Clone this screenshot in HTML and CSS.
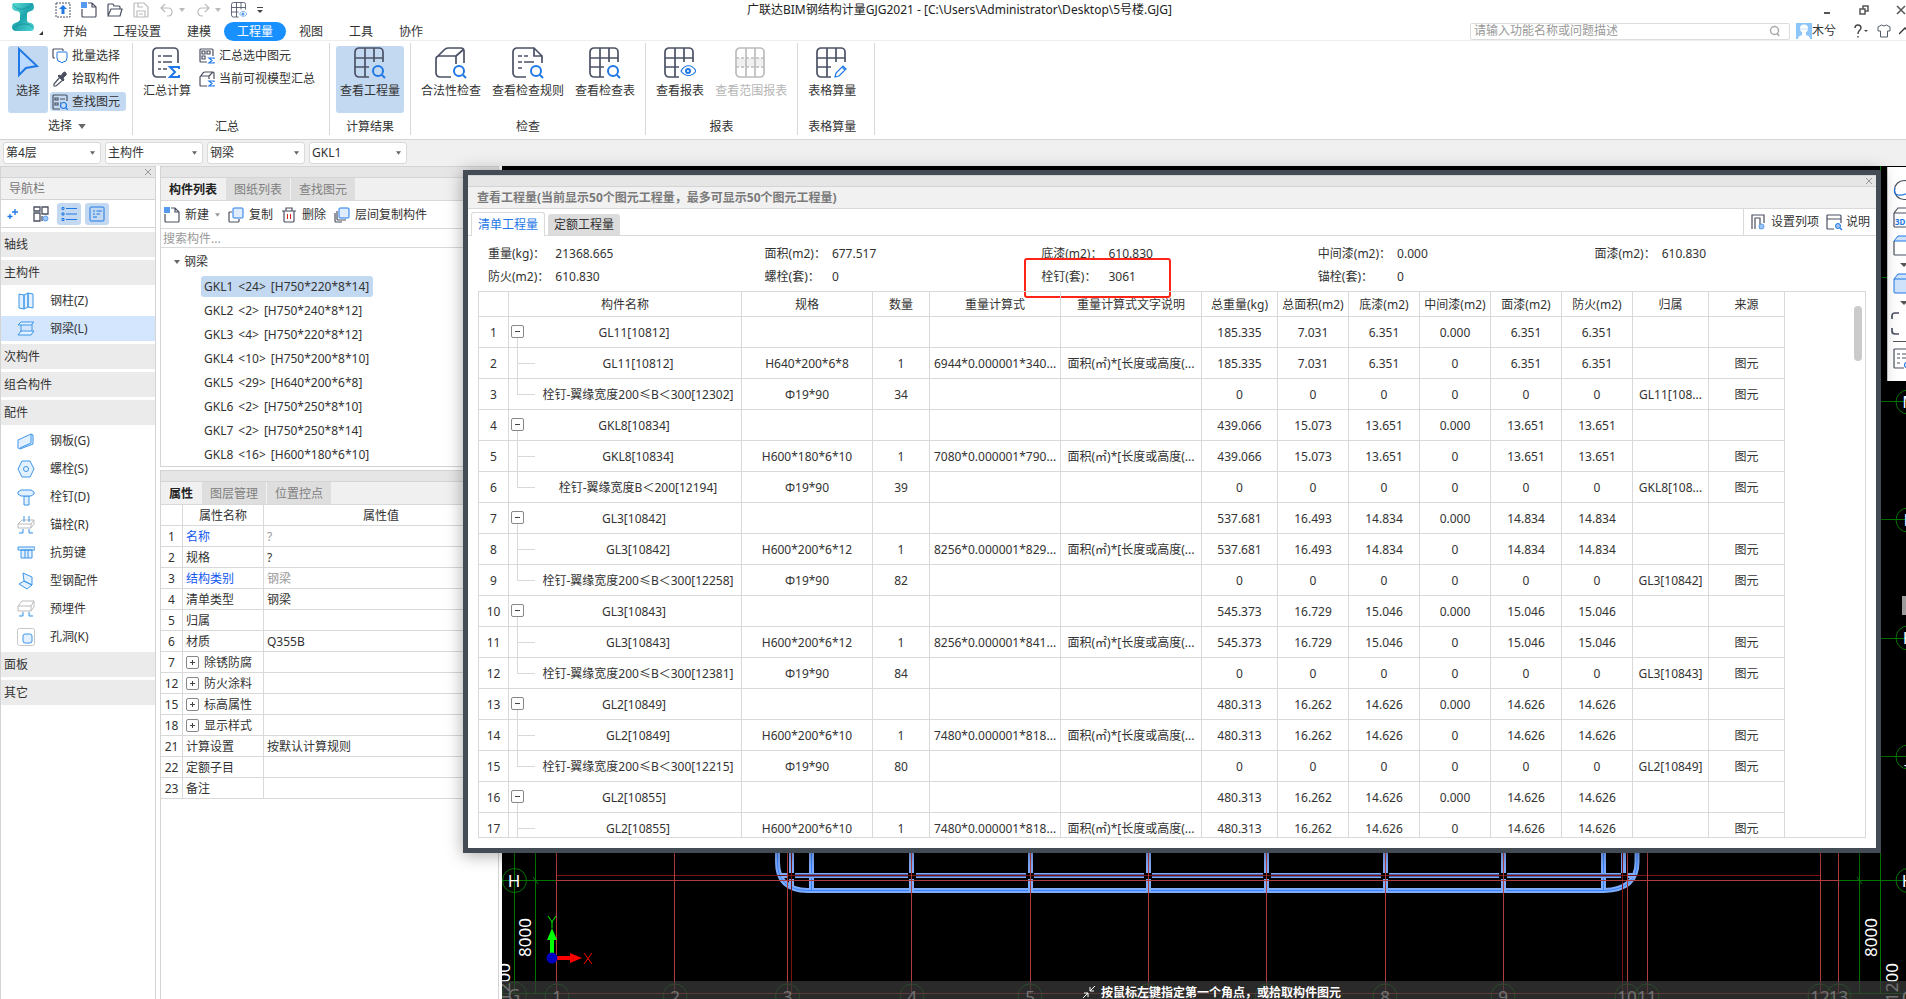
FILE: index.html
```html
<!DOCTYPE html>
<html lang="zh-CN">
<head>
<meta charset="utf-8">
<title>广联达BIM钢结构计量GJG2021</title>
<link rel="stylesheet" href="styles.css">
</head>
<body>
<svg class="sprite" aria-hidden="true">
  <defs>
    <linearGradient id="teal" x1="0" y1="0" x2="1" y2="1"><stop offset="0" stop-color="#5fe0d8"/><stop offset=".5" stop-color="#1fa5ad"/><stop offset="1" stop-color="#4fd6d6"/></linearGradient>
  </defs>
  <symbol id="i-grid" viewBox="0 0 32 32"><path d="M15 30H5a4 4 0 0 1-4-4V5a4 4 0 0 1 4-4h20a4 4 0 0 1 4 4v10M1 11h28M1 20h14M11 1v29M20 1v14" class="d2"/></symbol>
  <symbol id="i-lens" viewBox="0 0 32 32"><circle cx="24" cy="24" r="5" class="b2"/><path d="M28 28l3 3" class="b2"/></symbol>
  <symbol id="i-gridlens" viewBox="0 0 32 32"><use href="#i-grid"/><use href="#i-lens"/></symbol>
  <symbol id="i-grideye" viewBox="0 0 32 32"><use href="#i-grid"/><path d="M17 24c4-7 11-7 15 0c-4 6-11 6-15 0z" class="b1"/><circle cx="24" cy="24" r="2" class="b2"/></symbol>
  <symbol id="i-gridpen" viewBox="0 0 32 32"><use href="#i-grid"/><path d="M19 30l1-4 7-7 3 3-7 7zM26 20l3 3" class="b1"/></symbol>
  <symbol id="i-gridoff" viewBox="0 0 32 32"><path d="M2 11h27v9H2z" fill="#f0f0f0"/><path d="M5 1h20a4 4 0 0 1 4 4v21a4 4 0 0 1-4 4H5a4 4 0 0 1-4-4V5a4 4 0 0 1 4-4zM11 1v29M20 1v29" class="g2"/><path d="M1 11h28M1 20h28" class="g2" stroke-dasharray="3 2"/></symbol>
  <symbol id="i-sum" viewBox="0 0 32 32"><path d="M15 30H6a4 4 0 0 1-4-4V5a4 4 0 0 1 4-4h17a4 4 0 0 1 4 4v11M7 9h3M12 9h9M7 15h3M12 15h9M7 22h3M12 22h4" class="d2"/><path d="M28 22v-2H19l5 5-5 5h9v-2" class="b2"/></symbol>
  <symbol id="i-boxlens" viewBox="0 0 32 32"><path d="M16 30H5a4 4 0 0 1-4-4V12a3 3 0 0 1 3-3h17v8M2 10l7-7q2-2 4-2h13a3 3 0 0 1 3 3v12M21 9l8-7" class="d2"/><use href="#i-lens"/></symbol>
  <symbol id="i-doclens" viewBox="0 0 32 32"><path d="M14 30H5a4 4 0 0 1-4-4V5a4 4 0 0 1 4-4h17l8 8v7M22 1v8h8M6 9h4M12 9h4M6 15h4M12 15h10M6 21h4" class="d2"/><use href="#i-lens"/></symbol>
  <symbol id="i-cursor" viewBox="0 0 32 32"><path d="M7 2v26l7-7 11-2z" fill="#bcd9ff" stroke="#1f78e6" stroke-width="2"/></symbol>
  <symbol id="i-batch" viewBox="0 0 16 16"><path d="M11 3V2q0-1-1-1H2Q1 1 1 2v7q0 1 1 1h1" class="d1"/><path d="M6 4h8q1 0 1 1v5q0 4-4 4l-1 1-1-1q-4 0-4-4V5q0-1 1-1z" fill="#fff" stroke="#1f78e6"/></symbol>
  <symbol id="i-drop" viewBox="0 0 16 16"><path d="M8 6l3 3-7 6H2v-2z" class="d1"/><path d="M7 4l2 1 2-3q2-2 3 0t-1 3l-2 2 1 2-1 1-5-5z" fill="#4b5060" stroke="#4b5060"/></symbol>
  <symbol id="i-find" viewBox="0 0 16 16"><path d="M8 15H2Q1 15 1 14V2q0-1 1-1h12q1 0 1 1v5M3 4h3v2H3zM8 5h5M3 9h3v2H3zM8 9h1" class="d1"/><circle cx="11.500" cy="11.500" r="3" class="b1"/><path d="M14 14l2 2" class="b1"/></symbol>
  <symbol id="i-sumsel" viewBox="0 0 16 16"><path d="M8 14H2Q1 14 1 13V2q0-1 1-1h11q1 0 1 1v6M3 3h3v3H3zM8 3h3v3H8zM3 8h3v3H3z" class="d1"/><path d="M15 11v-1h-5l3 2.500L10 15h5v-1" class="b1"/></symbol>
  <symbol id="i-sumbox" viewBox="0 0 16 16"><path d="M8 15H2Q1 15 1 14V6q0-1 1-1h8v3M1 6l3-4q1-1 2-1h8q1 0 1 1v6M10 5l4-4" class="d1"/><path d="M15 11v-1h-5l3 2.500L10 15h5v-1" class="b1"/></symbol>
  <symbol id="i-up" viewBox="0 0 16 16"><path d="M1 1h14v14H1z" fill="none" stroke="#4b5060" stroke-dasharray="2 1"/><path d="M8 3l4 4H9.500v5h-3V7H4z" fill="#1f78e6"/></symbol>
  <symbol id="i-new" viewBox="0 0 16 16"><path d="M7 1h4l4 4v9q0 1-1 1H2q-1 0-1-1V7M11 1v4h4" class="d1"/><path d="M0 1h6M0 3h6M0 5h6M1 0v6M3 0v6M5 0v6" stroke="#1f78e6" fill="none"/></symbol>
  <symbol id="i-open" viewBox="0 0 16 16"><path d="M1 13V3q0-1 1-1h4l1 2h5q1 0 1 1v2M1 14l3-7h11l-2 7z" class="d1"/></symbol>
  <symbol id="i-save" viewBox="0 0 16 16"><path d="M2 1h9l4 4v9q0 1-1 1H2q-1 0-1-1V2q0-1 1-1zM4 15V9h8v6M5 1v4h5M6 12h4" class="g1"/></symbol>
  <symbol id="i-undo" viewBox="0 0 16 16"><path d="M6 2L2 6l4 4M2 6h7q4 0 4 4t-4 4H8" class="g1"/></symbol>
  <symbol id="i-redo" viewBox="0 0 16 16"><path d="M10 2l4 4-4 4M14 6H7q-4 0-4 4t4 4h1" class="g1"/></symbol>
  <symbol id="i-tri" viewBox="0 0 6 4"><path d="M0 0h6L3 4z" fill="currentColor"/></symbol>
  <symbol id="i-copy" viewBox="0 0 16 16"><path d="M4 5H2Q1 5 1 6v8q0 1 1 1h8q1 0 1-1v-2" class="d1"/><rect x="5" y="1" width="10" height="10" rx="1" fill="#e0edff" stroke="#1f78e6"/></symbol>
  <symbol id="i-lcopy" viewBox="0 0 16 16"><path d="M3 4v8q0 1 1 1h8M1 6v8q0 1 1 1h6" class="d1"/><rect x="5" y="1" width="10" height="10" rx="1" fill="#e0edff" stroke="#1f78e6"/></symbol>
  <symbol id="i-trash" viewBox="0 0 16 16"><path d="M1 4h14M5 4V1h6v3M3 4v10q0 1 1 1h8q1 0 1-1V4" class="d1"/><path d="M6.500 7v5M9.500 7v5" stroke="#e0261c"/></symbol>
  <symbol id="i-x" viewBox="0 0 8 8"><path d="M1 1l6 6M7 1l-6 6" stroke="currentColor" fill="none"/></symbol>
  <symbol id="n-col" viewBox="0 0 18 18"><path d="M2 2l5 1v14l-5-1zM7 3l4-2v14l-4 2zM11 1l5 1v14l-5-1z" class="n"/></symbol>
  <symbol id="n-beam" viewBox="0 0 18 18"><path d="M4 2h13l-3 3H1zM4 5v7M15 4v7M4 11h13l-3 4H1z" class="n"/></symbol>
  <symbol id="n-plate" viewBox="0 0 18 18"><path d="M1 8l13-6 2 1v9l-13 5-2-1zM14 2v9L3 16" class="n"/></symbol>
  <symbol id="n-bolt" viewBox="0 0 18 18"><path d="M5 1h8l4 8-4 8H5L1 9z" class="n"/><circle cx="9" cy="9" r="2.500" class="n"/></symbol>
  <symbol id="n-stud" viewBox="0 0 18 18"><path d="M7 8h5v9H7z" class="n"/><path d="M4 2h10l3 2v2l-3 2H4L1 6V4z" class="n"/></symbol>
  <symbol id="n-anchor" viewBox="0 0 18 18"><path d="M1 8l4-4h12l-3 4zM1 8v4h13V8M14 12l3-4V4" fill="none" stroke="#bbb"/><path d="M7 0v6M12 0v6M6 13v4H2M12 13v4h4" class="n"/></symbol>
  <symbol id="n-key" viewBox="0 0 18 18"><path d="M1 3h17v3H1zM4 6h11v8H4zM8 6v8M11 6v8" class="n"/></symbol>
  <symbol id="n-fit" viewBox="0 0 18 18"><path d="M6 1l9 4v8l-8-4zM7 9L2 12l8 5 5-4z" class="n"/></symbol>
  <symbol id="n-embed" viewBox="0 0 18 18"><path d="M1 6l4-5h12l-3 5zM1 6v5h13V6M14 11l3-4V1" fill="none" stroke="#bbb"/><path d="M6 12v4H2M12 12v4h4" class="n"/></symbol>
  <symbol id="n-hole" viewBox="0 0 18 18"><rect x=".5" y=".5" width="17" height="17" rx="2" fill="#fff" stroke="#c8c8c8"/><rect x="6" y="6" width="9" height="9" rx="2" class="n"/></symbol>
</svg>

<header class="top">
  <svg class="logo" viewBox="0 0 24 30"><path d="M2 1h19q2 1 2 4t-3 4q-4 1-4 3v6q0 3 4 3 3 1 3 4t-2 4H4q-3-1-3-4t3-4q4-1 5-3v-6q0-3-4-3Q1 8 1 5t1-4z" fill="url(#teal)"/><path d="M2 2q3 6 10 5t10-6M2 27q4-5 11-5t9 4" stroke="#17868f" fill="none" opacity=".6"/></svg>
  <svg class="logo-corner" viewBox="0 0 4 4"><path d="M4 0v4H0z" fill="#333"/></svg>
  <div class="top-main">
    <div class="titlebar">
      <div class="quick">
        <button aria-label="上传"><svg class="s16"><use href="#i-up"/></svg></button>
        <button aria-label="新建"><svg class="s16"><use href="#i-new"/></svg></button>
        <button aria-label="打开"><svg class="s16"><use href="#i-open"/></svg></button>
        <button aria-label="保存"><svg class="s16"><use href="#i-save"/></svg></button>
        <button aria-label="撤销" class="off"><svg class="s16"><use href="#i-undo"/></svg><svg class="tri"><use href="#i-tri"/></svg></button>
        <button aria-label="重做" class="off"><svg class="s16"><use href="#i-redo"/></svg><svg class="tri"><use href="#i-tri"/></svg></button>
        <button aria-label="查看报表"><svg class="s16"><use href="#i-grideye"/></svg></button>
        <button aria-label="自定义"><svg class="more" viewBox="0 0 6 7"><path d="M0 .5h6" stroke="#444"/><path d="M0 3h6L3 6z" fill="#444"/></svg></button>
      </div>
      <h1>广联达BIM钢结构计量GJG2021 - [C:\Users\Administrator\Desktop\5号楼.GJG]</h1>
      <div class="winbtns">
        <button aria-label="最小化"><svg viewBox="0 0 10 10"><path d="M2 8h6" stroke="#555" stroke-width="2"/></svg></button>
        <button aria-label="还原"><svg viewBox="0 0 10 10"><path d="M1 4h5v5H1zM4 4V1h5v5H6" fill="none" stroke="#555" stroke-width="1.500"/></svg></button>
        <button aria-label="关闭"><svg viewBox="0 0 10 10"><path d="M1 1l8 8M9 1l-8 8" stroke="#555" stroke-width="1.500"/></svg></button>
      </div>
    </div>
    <div class="menubar">
      <nav class="menu"><a href="#">开始</a><a href="#">工程设置</a><a href="#">建模</a><a href="#" class="on">工程量</a><a href="#">视图</a><a href="#">工具</a><a href="#">协作</a></nav>
      <div class="account">
        <label class="help"><input type="text" aria-label="搜索功能" placeholder="请输入功能名称或问题描述"><svg viewBox="0 0 12 12"><circle cx="5.500" cy="5.500" r="4" fill="none" stroke="#aaa" stroke-width="1.500"/><path d="M8 8l2 3" stroke="#aaa" stroke-width="1.500"/></svg></label>
        <a href="#" class="user"><svg viewBox="0 0 16 16"><path d="M0 0h16v16H0z" fill="#8fc6f9"/><circle cx="8" cy="5.500" r="4" fill="#fff"/><path d="M2 16q0-4 6-4t6 4zM6 8h4v5H6z" fill="#fff"/><path d="M4 6h8" stroke="#c5e1fb"/></svg>木兮</a>
        <button class="q" aria-label="帮助"><svg viewBox="0 0 14 14"><path d="M1 4q0-3 3-3t3 3q0 1-2 3-1 1-1 3M4 12v1.500" fill="none" stroke="#444" stroke-width="1.400"/><path d="M10 6h4l-2 2z" fill="#444"/></svg></button>
        <button class="shirt" aria-label="皮肤"><svg viewBox="0 0 14 14"><path d="M4.500 1q2.500 2 5 0L13 3v4h-2.500v6h-7V7H1V3z" fill="none" stroke="#555c6b"/></svg></button>
        <button class="fold" aria-label="折叠"><svg viewBox="0 0 12 8"><path d="M0 7l6-6 6 6" fill="none" stroke="#333" stroke-width="1.400"/></svg></button>
      </div>
    </div>
  </div>
</header>

<section class="ribbon">
  <div class="group first">
    <div class="tools">
      <button class="big on"><svg class="s32"><use href="#i-cursor"/></svg>选择</button>
      <div class="smalls">
        <button><svg class="s16"><use href="#i-batch"/></svg>批量选择</button>
        <button><svg class="s16"><use href="#i-drop"/></svg>拾取构件</button>
        <button class="on"><svg class="s16"><use href="#i-find"/></svg>查找图元</button>
      </div>
    </div>
    <div class="caption">选择 <svg class="tri wide"><use href="#i-tri"/></svg></div>
  </div>
  <div class="group roomy">
    <div class="tools">
      <button class="big"><svg class="s32"><use href="#i-sum"/></svg>汇总计算</button>
      <div class="smalls">
        <button><svg class="s16"><use href="#i-sumsel"/></svg>汇总选中图元</button>
        <button><svg class="s16"><use href="#i-sumbox"/></svg>当前可视模型汇总</button>
      </div>
    </div>
    <div class="caption">汇总</div>
  </div>
  <div class="group">
    <div class="tools"><button class="big on"><svg class="s32"><use href="#i-gridlens"/></svg>查看工程量</button></div>
    <div class="caption">计算结果</div>
  </div>
  <div class="group">
    <div class="tools">
      <button class="big"><svg class="s32"><use href="#i-boxlens"/></svg>合法性检查</button>
      <button class="big"><svg class="s32"><use href="#i-doclens"/></svg>查看检查规则</button>
      <button class="big"><svg class="s32"><use href="#i-gridlens"/></svg>查看检查表</button>
    </div>
    <div class="caption">检查</div>
  </div>
  <div class="group">
    <div class="tools">
      <button class="big"><svg class="s32"><use href="#i-grideye"/></svg>查看报表</button>
      <button class="big" disabled><svg class="s32"><use href="#i-gridoff"/></svg>查看范围报表</button>
    </div>
    <div class="caption">报表</div>
  </div>
  <div class="group roomy">
    <div class="tools"><button class="big"><svg class="s32"><use href="#i-gridpen"/></svg>表格算量</button></div>
    <div class="caption">表格算量</div>
  </div>
</section>

<div class="combos">
  <label class="combo"><select aria-label="楼层"><option>第4层</option></select><svg class="tri"><use href="#i-tri"/></svg></label>
  <label class="combo"><select aria-label="构件大类"><option>主构件</option></select><svg class="tri"><use href="#i-tri"/></svg></label>
  <label class="combo"><select aria-label="构件类型"><option>钢梁</option></select><svg class="tri"><use href="#i-tri"/></svg></label>
  <label class="combo"><select aria-label="构件"><option>GKL1</option></select><svg class="tri"><use href="#i-tri"/></svg></label>
</div>

<main class="work">
  <aside class="nav">
    <div class="strip"><button class="close" aria-label="关闭导航栏"><svg><use href="#i-x"/></svg></button></div>
    <h2>导航栏</h2>
    <div class="navtools">
      <button aria-label="添加"><svg viewBox="0 0 16 16"><path d="M10 3v6M7 6h6M5 8v5M2.500 10.500h5" stroke="#1f78e6" stroke-width="1.300"/></svg></button>
      <button aria-label="设置"><svg viewBox="0 0 16 16"><path d="M1 1h6v4H1zM9 1h6v7H9zM1 7h6v8H1zM9 10v5" fill="none" stroke="#4b5060" stroke-width="1.300"/><circle cx="12.500" cy="12.500" r="2.500" fill="#9cc4f5" stroke="#5a9df0"/></svg></button>
      <button class="on" aria-label="列表"><svg viewBox="0 0 16 16"><path d="M5 2.500h11M5 8h11M5 13.500h11" stroke="#1f78e6"/><path d="M1 1.500h2v2H1zM1 7h2v2H1zM1 12.500h2v2H1z" fill="none" stroke="#1f78e6"/></svg></button>
      <button class="on" aria-label="详情"><svg viewBox="0 0 16 16"><rect x="1" y="1" width="14" height="14" rx="1" fill="none" stroke="#1f78e6"/><path d="M4 5h2M7.500 5H13M4 8h2M7.500 8H11M4 11h4" stroke="#1f78e6"/></svg></button>
    </div>
    <ul class="cats">
      <li class="cat">轴线</li>
      <li class="cat">主构件</li>
      <li><svg><use href="#n-col"/></svg>钢柱(Z)</li>
      <li class="sel"><svg><use href="#n-beam"/></svg>钢梁(L)</li>
      <li class="cat">次构件</li>
      <li class="cat">组合构件</li>
      <li class="cat">配件</li>
      <li><svg><use href="#n-plate"/></svg>钢板(G)</li>
      <li><svg><use href="#n-bolt"/></svg>螺栓(S)</li>
      <li><svg><use href="#n-stud"/></svg>栓钉(D)</li>
      <li><svg><use href="#n-anchor"/></svg>锚栓(R)</li>
      <li><svg><use href="#n-key"/></svg>抗剪键</li>
      <li><svg><use href="#n-fit"/></svg>型钢配件</li>
      <li><svg><use href="#n-embed"/></svg>预埋件</li>
      <li><svg><use href="#n-hole"/></svg>孔洞(K)</li>
      <li class="cat">面板</li>
      <li class="cat">其它</li>
    </ul>
  </aside>

  <div class="side">
    <section class="panel list">
      <div class="strip"></div>
      <div class="tabs"><button class="on">构件列表</button><button>图纸列表</button><button>查找图元</button></div>
      <div class="bar">
        <button><svg class="s16"><use href="#i-new"/></svg>新建<svg class="tri"><use href="#i-tri"/></svg></button>
        <button><svg class="s16"><use href="#i-copy"/></svg>复制</button>
        <button><svg class="s16"><use href="#i-trash"/></svg>删除</button>
        <button><svg class="s16"><use href="#i-lcopy"/></svg>层间复制构件</button>
      </div>
      <input class="search" type="text" aria-label="搜索构件" placeholder="搜索构件...">
      <ul class="tree">
        <li class="root"><svg class="tri"><use href="#i-tri"/></svg>钢梁</li>
        <li><span class="row sel"><b>GKL1</b><b>&lt;24&gt;</b><b>[H750*220*8*14]</b></span></li>
        <li><span class="row"><b>GKL2</b><b>&lt;2&gt;</b><b>[H750*240*8*12]</b></span></li>
        <li><span class="row"><b>GKL3</b><b>&lt;4&gt;</b><b>[H750*220*8*12]</b></span></li>
        <li><span class="row"><b>GKL4</b><b>&lt;10&gt;</b><b>[H750*200*8*10]</b></span></li>
        <li><span class="row"><b>GKL5</b><b>&lt;29&gt;</b><b>[H640*200*6*8]</b></span></li>
        <li><span class="row"><b>GKL6</b><b>&lt;2&gt;</b><b>[H750*250*8*10]</b></span></li>
        <li><span class="row"><b>GKL7</b><b>&lt;2&gt;</b><b>[H750*250*8*14]</b></span></li>
        <li><span class="row"><b>GKL8</b><b>&lt;16&gt;</b><b>[H600*180*6*10]</b></span></li>
      </ul>
    </section>
    <section class="panel props">
      <div class="strip"></div>
      <div class="tabs"><button class="on">属性</button><button>图层管理</button><button>位置控点</button></div>
      <table class="proptable">
        <colgroup><col class="p-no"><col class="p-name"><col></colgroup>
        <thead><tr><th></th><th>属性名称</th><th>属性值</th></tr></thead>
        <tbody>
          <tr><td>1</td><td class="link">名称</td><td class="dim">?</td></tr>
          <tr><td>2</td><td>规格</td><td>?</td></tr>
          <tr><td>3</td><td class="link">结构类别</td><td class="dim">钢梁</td></tr>
          <tr><td>4</td><td>清单类型</td><td>钢梁</td></tr>
          <tr><td>5</td><td>归属</td><td></td></tr>
          <tr><td>6</td><td>材质</td><td>Q355B</td></tr>
          <tr><td>7</td><td><button class="tog plus" aria-label="展开"></button>除锈防腐</td><td></td></tr>
          <tr><td>12</td><td><button class="tog plus" aria-label="展开"></button>防火涂料</td><td></td></tr>
          <tr><td>15</td><td><button class="tog plus" aria-label="展开"></button>标高属性</td><td></td></tr>
          <tr><td>18</td><td><button class="tog plus" aria-label="展开"></button>显示样式</td><td></td></tr>
          <tr><td>21</td><td>计算设置</td><td>按默认计算规则</td></tr>
          <tr><td>22</td><td>定额子目</td><td></td></tr>
          <tr><td>23</td><td>备注</td><td></td></tr>
        </tbody>
      </table>
    </section>
  </div>

  <section class="canvas">
    <svg class="drawing" viewBox="502 166 1404 833" preserveAspectRatio="xMinYMin slice">
      <g class="green">
        <path d="M514.500 840v154M535.500 840v154M502 880.500h55M1838 880.500h70M1859.500 840v154M1880.500 166v828M1882 277.500h8M1881 401.500h25M1881 519.500h25M1881 638.500h25M1881 756.500h25M533 877l5 7M1857 877l5 7M1838 993.500h70M502 993.500h55"/>
        <circle cx="514.500" cy="880.500" r="12"/><circle cx="1908" cy="880.500" r="12"/>
        <circle cx="1908" cy="402" r="12"/><circle cx="1908" cy="520" r="12"/><circle cx="1908" cy="638" r="12"/><circle cx="1908" cy="757" r="12"/>
        <circle cx="514.500" cy="994" r="12"/><circle cx="557" cy="996" r="12"/><circle cx="675" cy="996" r="12"/><circle cx="787.500" cy="996" r="12"/><circle cx="912" cy="996" r="12"/><circle cx="1030" cy="996" r="12"/><circle cx="1148.500" cy="996" r="12"/><circle cx="1267" cy="996" r="12"/><circle cx="1385" cy="996" r="12"/><circle cx="1503" cy="996" r="12"/><circle cx="1627" cy="996" r="12"/><circle cx="1647" cy="996" r="12"/><circle cx="1820" cy="996" r="12"/><circle cx="1838.500" cy="996" r="12"/>
      </g>
      <g class="beam">
        <path class="out" d="M777.500 840v22q0 28 30 28.500H1604q33-1 33-28.500v-22M811.500 840v50M1603.500 840v50"/>
        <path class="in" d="M777.500 840v22q0 28 30 28.500H1604q33-1 33-28.500v-22M811.500 840v50M1603.500 840v50"/>
        <path class="out" d="M791.500 840v33M911.500 840v33M1030.500 840v33M1148.500 840v33M1266.500 840v33M1385.500 840v33M1503.500 840v33M1623.500 840v33M911.500 879v12M1030.500 879v12M1148.500 879v12M1266.500 879v12M1385.500 879v12M1503.500 879v12M791.500 879v8"/>
        <path class="out" d="M781 875.500h6M795 875.500h113M916 875.500h110M1034 875.500h110M1152 875.500h111M1271 875.500h110M1389 875.500h110M1507 875.500h114M1627 875.500h8"/>
        <path class="core" d="M795 875.500h113M916 875.500h110M1034 875.500h110M1152 875.500h111M1271 875.500h110M1389 875.500h110M1507 875.500h114"/>
      </g>
      <path class="red dark" d="M557 875.500h1263M791.500 840v154M1622.500 840v154"/>
      <path class="red" d="M557 880.500h1281M557 993.500h1281M556.500 840v154M674.500 840v154M787.500 840v154M911.500 840v154M1030.500 840v154M1148.500 840v154M1266.500 840v154M1385.500 840v154M1503.500 840v154M1627.500 840v154M1647.500 840v154M1820.500 840v154M1838.500 840v154"/>
      <g class="labels">
        <text x="514" y="887">H</text><text x="1908" y="887">H</text><text x="1910" y="408">M</text><text x="1908" y="526">L</text><text x="1908" y="644">K</text><text x="1908" y="763">J</text>
        <text x="514" y="1001">G</text><text x="557" y="1003">1</text><text x="675" y="1003">2</text><text x="787.500" y="1003">3</text><text x="912" y="1003">4</text><text x="1030" y="1003">5</text><text x="1148.500" y="1003">6</text><text x="1267" y="1003">7</text><text x="1385" y="1003">8</text><text x="1503" y="1003">9</text><text x="1627" y="1003">10</text><text x="1647" y="1003">11</text><text x="1820" y="1003">12</text><text x="1838.500" y="1003">13</text><text x="1908" y="1003">G</text>
        <text transform="translate(531 957) rotate(-90)">8000</text><text transform="translate(1877 957) rotate(-90)">8000</text>
        <text transform="translate(510 1002) rotate(-90)">1200</text><text transform="translate(1898 1002) rotate(-90)">1200</text>
      </g>
      <path d="M1902 596h4v19h-4z" fill="#9b9b9b"/>
      <path d="M550 958V940h-3l5-12 5 12h-3v18z" fill="#0f0"/><path d="M552 956h18v-3l12 5-12 5v-3h-18z" fill="#f00"/><circle cx="552" cy="958" r="5.500" fill="#0000c0"/>
      <path d="M548 916l4 6 4-6M552 922v6" stroke="#0f0" fill="none"/><path d="M584 953l8 11M592 953l-8 11" stroke="#f00" fill="none"/>
    </svg>
    <div class="prompt"><svg viewBox="0 0 14 14"><path d="M13 1L8 6V2M8 6h4M1 13l5-5v4M6 8H2" stroke="#fff" fill="none"/></svg>按鼠标左键指定第一个角点，或拾取构件图元</div>
    <div class="dock">
      <svg viewBox="0 0 24 22"><circle cx="11" cy="11" r="9.500" class="d1"/><path d="M2 9q-2 6 3 7 8 1 17-7" class="b1"/></svg>
      <svg viewBox="0 0 24 22"><path d="M1 6l4-5h19M1 6v13q0 1 1 1h22M1 6h23" class="d1"/><text x="2" y="18" class="three">3D</text></svg>
      <svg viewBox="0 0 24 22"><path d="M1 6l4-5h19v5z" fill="#cfe2fb" stroke="#1f78e6"/><path d="M1 6v13q0 1 1 1h22" class="d1"/></svg>
      <svg class="arr" viewBox="0 0 24 4"><path d="M7 0h8l-4 4z" fill="#555"/></svg>
      <svg viewBox="0 0 24 22"><path d="M5 1h19v19H2q-1 0-1-1V6z" fill="#cfe2fb"/><path d="M24 1H5L1 6v13q0 1 1 1h22M1 6h23" fill="none" stroke="#1f78e6"/></svg>
      <svg class="arr" viewBox="0 0 24 4"><path d="M7 0h8l-4 4z" fill="#555"/></svg>
      <svg class="br" viewBox="2 0 24 24"><path d="M8 2H4Q1 2 1 5v3M1 17v3q0 3 3 3h4" class="d2"/></svg>
      <hr>
      <svg viewBox="0 0 24 22"><path d="M24 1H2Q1 1 1 2v17q0 1 1 1h9M4 6h3M9 6h9M4 10h3M9 10h9M4 15h3" class="d1"/><circle cx="14" cy="17" r="2.500" class="b1"/></svg>
    </div>
  </section>
</main>

<section class="dialog" role="dialog" aria-label="查看工程量">
  <div class="strip"><button class="close" aria-label="关闭"><svg><use href="#i-x"/></svg></button></div>
  <h2>查看工程量(当前显示50个图元工程量，最多可显示50个图元工程量)</h2>
  <div class="dtabs">
    <button class="on">清单工程量</button><button>定额工程量</button>
    <div class="dactions">
      <button><svg class="s16" viewBox="0 0 16 16"><path d="M1 15V1h12v8M4 15V4h5v11" class="d1"/><circle cx="10.500" cy="12.500" r="2.500" fill="#9cc4f5" stroke="#5a9df0"/></svg>设置列项</button>
      <button><svg class="s16" viewBox="0 0 16 16"><path d="M8 15H2Q1 15 1 14V2q0-1 1-1h12q1 0 1 1v7M1 5h14" class="d1"/><circle cx="12" cy="12" r="2.500" fill="#9cc4f5" stroke="#1f78e6"/><path d="M14 14l2 2" class="b1"/></svg>说明</button>
    </div>
  </div>
  <div class="stats">
    <dl><dt>重量(kg)：</dt><dd>21368.665</dd><dt>防火(m2)：</dt><dd>610.830</dd></dl>
    <dl><dt>面积(m2)：</dt><dd>677.517</dd><dt>螺栓(套)：</dt><dd>0</dd></dl>
    <dl><dt>底漆(m2)：</dt><dd>610.830</dd><dt>栓钉(套)：</dt><dd>3061</dd></dl>
    <dl><dt>中间漆(m2)：</dt><dd>0.000</dd><dt>锚栓(套)：</dt><dd>0</dd></dl>
    <dl><dt>面漆(m2)：</dt><dd>610.830</dd></dl>
  </div>
  <div class="mark"></div>
  <div class="gridwrap">
    <table class="qty">
      <colgroup><col class="c30"><col class="c233"><col class="c131"><col class="c57"><col class="c131"><col class="c141"><col class="c76"><col class="c71"><col class="c71"><col class="c71"><col class="c71"><col class="c71"><col class="c76"><col class="c76"></colgroup>
      <thead><tr><th><th>构件名称<th>规格<th>数量<th>重量计算式<th>重量计算式文字说明<th>总重量(kg)<th>总面积(m2)<th>底漆(m2)<th>中间漆(m2)<th>面漆(m2)<th>防火(m2)<th>归属<th>来源</tr></thead>
      <tbody>
        <tr class="par"><td>1<td><button class="tog" aria-label="折叠"></button>GL11[10812]<td><td><td><td><td>185.335<td>7.031<td>6.351<td>0.000<td>6.351<td>6.351<td><td></tr>
        <tr class="mid"><td>2<td>GL11[10812]<td>H640*200*6*8<td>1<td>6944*0.000001*340...<td>面积(㎡)*[长度或高度(...<td>185.335<td>7.031<td>6.351<td>0<td>6.351<td>6.351<td><td>图元</tr>
        <tr class="end"><td>3<td>栓钉-翼缘宽度200≤B＜300[12302]<td>Φ19*90<td>34<td><td><td>0<td>0<td>0<td>0<td>0<td>0<td>GL11[108...<td>图元</tr>
        <tr class="par"><td>4<td><button class="tog" aria-label="折叠"></button>GKL8[10834]<td><td><td><td><td>439.066<td>15.073<td>13.651<td>0.000<td>13.651<td>13.651<td><td></tr>
        <tr class="mid"><td>5<td>GKL8[10834]<td>H600*180*6*10<td>1<td>7080*0.000001*790...<td>面积(㎡)*[长度或高度(...<td>439.066<td>15.073<td>13.651<td>0<td>13.651<td>13.651<td><td>图元</tr>
        <tr class="end"><td>6<td>栓钉-翼缘宽度B＜200[12194]<td>Φ19*90<td>39<td><td><td>0<td>0<td>0<td>0<td>0<td>0<td>GKL8[108...<td>图元</tr>
        <tr class="par"><td>7<td><button class="tog" aria-label="折叠"></button>GL3[10842]<td><td><td><td><td>537.681<td>16.493<td>14.834<td>0.000<td>14.834<td>14.834<td><td></tr>
        <tr class="mid"><td>8<td>GL3[10842]<td>H600*200*6*12<td>1<td>8256*0.000001*829...<td>面积(㎡)*[长度或高度(...<td>537.681<td>16.493<td>14.834<td>0<td>14.834<td>14.834<td><td>图元</tr>
        <tr class="end"><td>9<td>栓钉-翼缘宽度200≤B＜300[12258]<td>Φ19*90<td>82<td><td><td>0<td>0<td>0<td>0<td>0<td>0<td>GL3[10842]<td>图元</tr>
        <tr class="par"><td>10<td><button class="tog" aria-label="折叠"></button>GL3[10843]<td><td><td><td><td>545.373<td>16.729<td>15.046<td>0.000<td>15.046<td>15.046<td><td></tr>
        <tr class="mid"><td>11<td>GL3[10843]<td>H600*200*6*12<td>1<td>8256*0.000001*841...<td>面积(㎡)*[长度或高度(...<td>545.373<td>16.729<td>15.046<td>0<td>15.046<td>15.046<td><td>图元</tr>
        <tr class="end"><td>12<td>栓钉-翼缘宽度200≤B＜300[12381]<td>Φ19*90<td>84<td><td><td>0<td>0<td>0<td>0<td>0<td>0<td>GL3[10843]<td>图元</tr>
        <tr class="par"><td>13<td><button class="tog" aria-label="折叠"></button>GL2[10849]<td><td><td><td><td>480.313<td>16.262<td>14.626<td>0.000<td>14.626<td>14.626<td><td></tr>
        <tr class="mid"><td>14<td>GL2[10849]<td>H600*200*6*10<td>1<td>7480*0.000001*818...<td>面积(㎡)*[长度或高度(...<td>480.313<td>16.262<td>14.626<td>0<td>14.626<td>14.626<td><td>图元</tr>
        <tr class="end"><td>15<td>栓钉-翼缘宽度200≤B＜300[12215]<td>Φ19*90<td>80<td><td><td>0<td>0<td>0<td>0<td>0<td>0<td>GL2[10849]<td>图元</tr>
        <tr class="par"><td>16<td><button class="tog" aria-label="折叠"></button>GL2[10855]<td><td><td><td><td>480.313<td>16.262<td>14.626<td>0.000<td>14.626<td>14.626<td><td></tr>
        <tr class="mid"><td>17<td>GL2[10855]<td>H600*200*6*10<td>1<td>7480*0.000001*818...<td>面积(㎡)*[长度或高度(...<td>480.313<td>16.262<td>14.626<td>0<td>14.626<td>14.626<td><td>图元</tr>
      </tbody>
    </table>
    <div class="thumb"></div>
  </div>
</section>
</body>
</html>
```
FILE: styles.css
```css
* { box-sizing: border-box; margin: 0; padding: 0; }
body {
  position: relative; display: flex; flex-direction: column; height: 100vh; overflow: hidden;
  background: #fff; color: #333;
  font: 12px/16px "Noto Sans", "Noto Sans CJK SC", sans-serif;
}
button, input, select { font: inherit; color: inherit; border: 0; background: none; }
button { display: inline-flex; align-items: center; white-space: nowrap; }
a { color: inherit; text-decoration: none; }
ul { list-style: none; }
h1, h2 { font-size: 12px; font-weight: 400; }
svg { display: block; flex: none; overflow: visible; }
.sprite { position: absolute; width: 0; height: 0; }
.s16 { width: 16px; height: 16px; }
.s32 { width: 32px; height: 32px; }
.tri { width: 6px; height: 4px; color: #666; }
.d1, .b1, .g1 { fill: none; stroke: #4b5060; stroke-width: 1.2; }
.d2, .b2, .g2 { fill: none; stroke: #4b5265; stroke-width: 1.7; }
.b1, .b2 { stroke: #1f78e6; }
.b2 { stroke-width: 2; }
.g1, .g2 { stroke: #bcbcbc; }
.n { fill: #e2f0ff; stroke: #3d96e8; }

/* title and menu */
.top { position: relative; display: flex; height: 41px; border-bottom: 1px solid #eee; }
.logo { width: 24px; height: 30px; margin: 2px 0 0 11px; }
.logo-corner { width: 4px; height: 4px; margin: 31px 0 0 4px; }
.top-main { flex: 1; min-width: 0; }
.titlebar { display: flex; align-items: center; height: 20px; margin-left: 12px; position: relative; }
.quick { display: flex; gap: 10px; }
.quick button { gap: 4px; }
.quick .off, .quick .off .tri { color: #bbb; }
.more { width: 6px; height: 7px; }
.titlebar h1 { flex: 1; text-align: center; padding-right: 250px; color: #222; }
.winbtns { position: absolute; right: 0; display: flex; gap: 27px; }
.winbtns svg { width: 10px; height: 10px; }
.menubar { display: flex; justify-content: space-between; margin-top: 2px; padding-left: 7px; }
.menu { display: flex; }
.menu a { padding: 0 13px; line-height: 19px; border-radius: 10px; }
.menu .on { background: #1890ff; color: #fff; }
.account { display: flex; align-items: center; height: 18px; overflow: hidden; }
.help { display: flex; align-items: center; width: 320px; height: 17px; border: 1px solid #ddd; border-radius: 2px; padding: 0 8px 0 3px; }
.help input { flex: 1; outline: 0; }
.help svg { width: 12px; height: 12px; }
::placeholder { color: #999; opacity: 1; }
.user { display: flex; margin-left: 6px; }
.user svg { width: 16px; height: 16px; }
.q { margin-left: 18px; }
.q svg, .shirt svg { width: 14px; height: 14px; }
.shirt { margin-left: 9px; }
.fold { width: 7px; margin-left: 8px; overflow: hidden; }
.fold svg { width: 12px; height: 8px; }

/* ribbon */
.ribbon { display: flex; height: 99px; padding-top: 2px; border-bottom: 1px solid #d4d4d4; }
.group { display: flex; flex-direction: column; height: 92px; padding: 3px 6px 0; border-right: 1px solid #d9d9d9; }
.group.first { padding-left: 8px; }
.group.roomy { padding-right: 14px; }
.tools { display: flex; gap: 3px; height: 68px; }
.big { flex-direction: column; height: 67px; padding: 0 4px; border-radius: 3px; }
.first .tools { gap: 2px; }
.big svg { margin: 1px 0 4px; }
.big.on, .smalls .on { background: #c3d9f1; }
.big:disabled { color: #b5b5b5; }
.smalls { display: flex; flex-direction: column; gap: 4px; }
.smalls button { height: 19px; gap: 4px; padding: 0 6px 0 2px; border-radius: 3px; }
.roomy .smalls button { padding: 0 0 0 1px; }
.caption { text-align: center; margin-top: 6px; }
.first .caption { display: flex; justify-content: center; align-items: center; gap: 6px; margin-top: 4px; }
.tri.wide { width: 8px; height: 5px; }

.combos { display: flex; gap: 4px; height: 26px; padding: 2px 3px; background: #f0f0f0; }
.combo { display: flex; align-items: center; width: 98px; height: 22px; padding: 0 5px 0 2px; background: #fff; border: 1px solid #d9d9d9; border-radius: 3px; }
.combo select { flex: 1; appearance: none; outline: 0; }
.combo .tri { width: 5px; }

/* workspace */
.work { flex: 1; display: flex; min-height: 0; }
.strip { display: flex; justify-content: flex-end; align-items: center; height: 12px; background: #e6e6e6; border: solid #d4d4d4; border-width: 1px 0; padding-right: 3px; }
.close { color: #999; }
.close svg { width: 8px; height: 8px; }
.nav { width: 156px; border: solid #d4d4d4; border-width: 0 1px; margin-right: 4px; }
.nav h2 { height: 22px; padding-left: 8px; line-height: 22px; color: #777; background: #f1f1f1; border-bottom: 1px solid #d4d4d4; }
.navtools { display: flex; align-items: center; height: 28px; gap: 4px; border-bottom: 1px solid #d4d4d4; }
.navtools button { width: 24px; height: 22px; justify-content: center; border-radius: 3px; }
.navtools .on { background: #c3d9f1; }
.navtools svg { width: 16px; height: 16px; }
.cats { display: flex; flex-direction: column; gap: 3px; padding-top: 4px; }
.cats li { display: flex; align-items: center; height: 25px; padding-left: 16px; gap: 15px; }
.cats svg { width: 18px; height: 18px; }
.cats .cat { background: #ebebeb; padding-left: 3px; }
.cats .sel { background: #d3e6fd; }

.side { display: flex; flex-direction: column; gap: 3px; width: 339px; margin-right: 3px; }
.panel { border: solid #d4d4d4; border-width: 0 1px; }
.list { border-bottom-width: 1px; }
.props { flex: 1; }
.tabs { display: flex; gap: 1px; height: 23px; background: #f0f0f0; border-bottom: 1px solid #d9d9d9; }
.tabs button { padding: 2px 8px 0; background: #dedede; color: #808080; }
.tabs .on { background: #f0f0f0; color: #222; font-weight: 700; }
.bar { display: flex; align-items: center; gap: 8px; height: 28px; padding-left: 3px; border-bottom: 1px solid #d9d9d9; }
.bar button { gap: 5px; }
.bar .tri { width: 5px; margin-left: 1px; color: #999; }
.search { display: block; width: 100%; height: 19px; padding-left: 2px; border-bottom: 1px solid #d9d9d9; outline: 0; }
.tree { padding-top: 2px; }
.tree li { display: flex; align-items: center; height: 24px; padding-left: 40px; }
.tree .root { padding-left: 13px; gap: 4px; }
.row { display: flex; gap: 5px; padding: 0 4px 0 3px; line-height: 21px; border-radius: 3px; }
.row b { font-weight: 400; }
.row.sel { background: #c3d9f1; }

table { border-spacing: 0; table-layout: fixed; }
th { font-weight: 400; }
th, td { border: solid #d9d9d9; border-width: 0 1px 1px 0; padding-top: 2px; overflow: hidden; white-space: nowrap; }
.proptable { width: 100%; }
.proptable td, .proptable th { height: 21px; line-height: 16px; }
.proptable td { padding-left: 3px; }
.proptable td:first-child { padding-left: 0; text-align: center; }
.proptable th:last-child, .proptable td:last-child { border-right: 0; }
.proptable .p-no { width: 22px; }
.proptable .p-name { width: 81px; }
.link { color: #1257f0; }
.dim { color: #999; }
.tog { position: relative; width: 13px; height: 13px; border: 1px solid #888; border-radius: 2px; background: #fff; vertical-align: middle; }
.proptable .tog { margin: -2px 5px 0 0; }
.tog::before, .plus::after { content: ""; position: absolute; left: 3px; top: 5px; width: 5px; height: 1px; background: #444; }
.plus::after { left: 5px; top: 3px; width: 1px; height: 5px; }

/* model view */
.canvas { position: relative; flex: 1; overflow: hidden; background: #000; }
.drawing { width: 100%; height: 100%; }
.green { fill: none; stroke: #007400; }
.red { fill: none; stroke: #b03c3c; }
.red.dark { stroke: #7a1414; }
.beam { fill: none; }
.out { stroke: #7fabfb; stroke-width: 5; }
.in { stroke: #3583ff; stroke-width: 1; }
.core { stroke: #20184a; stroke-width: 2; }
.labels { fill: #fff; font-size: 17px; }
.labels text:not([transform]) { text-anchor: middle; }
.prompt { position: absolute; left: 0; right: 0; bottom: 0; height: 18px; padding: 4px 0 0 580px; display: flex; gap: 5px; color: #fff; font-weight: 700; background: rgba(58, 58, 58, .72); white-space: nowrap; overflow: hidden; }
.prompt svg { width: 14px; height: 14px; }
.dock { position: absolute; right: 0; top: 1px; width: 19px; padding: 12px 0 11px 5px; display: flex; flex-direction: column; gap: 6px; overflow: hidden; background: #fff; border-left: 1px solid #ccc; }
.dock svg { width: 24px; height: 22px; }
.dock .arr { height: 4px; }
.dock .br { height: 24px; }
.dock hr { border: 0; height: 1px; background: #555; }
.three { fill: #1f78e6; font-size: 8px; font-weight: 700; }

/* quantity window */
.dialog { position: absolute; left: 463px; right: 25px; top: 170px; bottom: 146px; display: flex; flex-direction: column; background: #fff; border: 5px solid #434b54; box-shadow: 0 2px 16px rgba(0, 0, 0, .35); }
.dialog h2 { height: 22px; padding-left: 9px; line-height: 22px; font-weight: 700; color: #7a7a7a; background: #f1f1f1; border-bottom: 1px solid #d9d9d9; }
.dtabs { display: flex; align-items: flex-end; height: 27px; padding-left: 3px; gap: 3px; border-bottom: 1px solid #d9d9d9; }
.dtabs > button { height: 21px; padding: 0 6px; background: #dcdcdc; border-radius: 3px 3px 0 0; }
.dtabs > .on { height: 24px; margin-bottom: -1px; background: #fff; color: #1f78e6; border: 1px solid #d9d9d9; border-bottom: 0; }
.dactions { display: flex; align-self: stretch; gap: 7px; margin-left: auto; padding: 0 6px 0 7px; border-left: 1px solid #d9d9d9; }
.dactions button { gap: 4px; }
.stats { display: grid; grid-template-columns: repeat(5, 1fr); padding: 6px 5px 3px 20px; }
.stats dl { display: grid; grid-template-columns: auto 1fr; column-gap: 6px; align-content: start; line-height: 23px; }
.mark { position: absolute; left: 556px; top: 83px; width: 147px; height: 40px; border: 2px solid #ff2418; border-radius: 3px; }
.gridwrap { position: relative; flex: 1; min-height: 0; margin: 0 10px 10px; overflow: hidden; border: 1px solid #d9d9d9; }
.qty { width: 1306px; text-align: center; }
.qty th { height: 25px; }
.qty td { height: 31px; position: relative; }
.qty td:nth-child(2) { padding-left: 26px; }
.qty .par td:nth-child(2) { padding-left: 18px; }
.qty .tog { position: absolute; left: 2px; top: 8px; }
.qty .mid td:nth-child(2)::before, .qty .end td:nth-child(2)::before { content: ""; position: absolute; left: 8px; top: 0; width: 17px; height: 15px; border: solid #d9d9d9; border-width: 0 0 1px 1px; }
.qty .mid td:nth-child(2)::after { content: ""; position: absolute; left: 8px; top: 15px; height: 16px; border-left: 1px solid #d9d9d9; }
.qty .par td:nth-child(2)::after { content: ""; position: absolute; left: 8px; top: 21px; height: 10px; border-left: 1px solid #d9d9d9; }
.c30 { width: 30px; } .c57 { width: 57px; } .c71 { width: 71px; } .c76 { width: 76px; }
.c131 { width: 131px; } .c141 { width: 141px; } .c233 { width: 233px; }
.thumb { position: absolute; right: 3px; top: 14px; width: 8px; height: 55px; border-radius: 4px; background: #cbcbcb; }
```
